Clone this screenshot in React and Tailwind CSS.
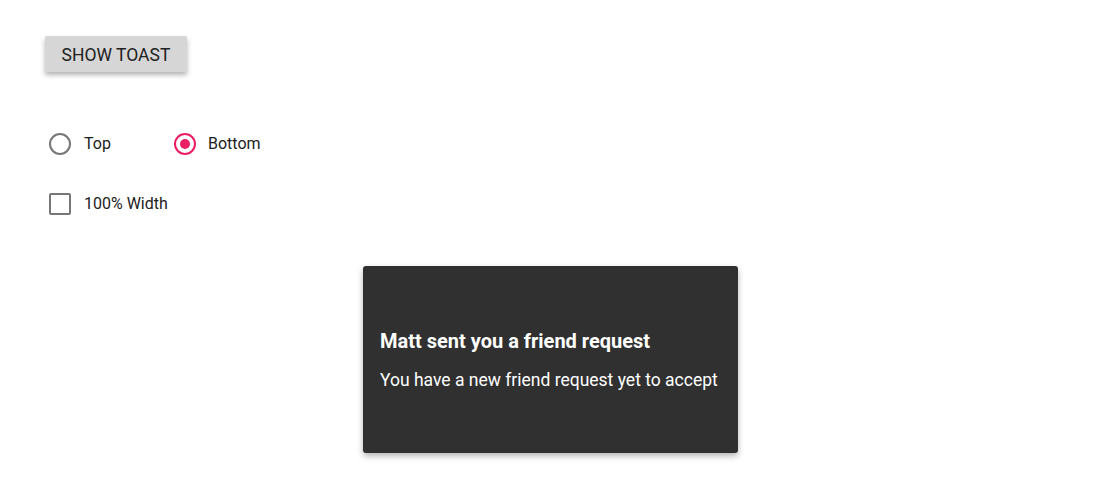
export default function App() {
  return (
    <div className="min-h-[483px] bg-white font-['Roboto',sans-serif] text-[#212121]">
      <div className="pt-[36px] pl-[45px]">
        <button className="h-[36px] w-[142px] rounded-[2px] bg-[#d6d6d6] pt-[2px] text-[17.5px] uppercase text-[#212121] shadow-[0_3px_5px_rgba(0,0,0,0.3)]">
          Show Toast
        </button>
      </div>

      <div className="mt-[61px] ml-[49px] flex items-center h-[22px]">
        <label className="flex items-center gap-[13px] w-[125px]">
          <span className="h-[22px] w-[22px] rounded-full border-[2.5px] border-[#767676]" />
          <span className="text-[16px]">Top</span>
        </label>
        <label className="flex items-center gap-[12px]">
          <span className="h-[22px] w-[22px] rounded-full border-[2.5px] border-[#e91e63] flex items-center justify-center">
            <span className="h-[10px] w-[10px] rounded-full bg-[#e91e63]" />
          </span>
          <span className="text-[16px]">Bottom</span>
        </label>
      </div>

      <div className="mt-[38px] ml-[49px] flex items-center gap-[13px] h-[22px]">
        <span className="h-[22px] w-[22px] rounded-[2px] border-[2.5px] border-[#767676]" />
        <span className="text-[16px]">100% Width</span>
      </div>

      <div className="mt-[51px] flex justify-center pl-[2px]">
        <div className="w-[375px] h-[187px] rounded-[3px] bg-[#303030] text-white shadow-[0_3px_6px_rgba(0,0,0,0.3)] flex flex-col justify-center px-[17px]">
          <div className="text-[20px] font-bold leading-[24px]">Matt sent you a friend request</div>
          <div className="mt-[16px] text-[17.5px] leading-[22px]">You have a new friend request yet to accept</div>
        </div>
      </div>
    </div>
  );
}
